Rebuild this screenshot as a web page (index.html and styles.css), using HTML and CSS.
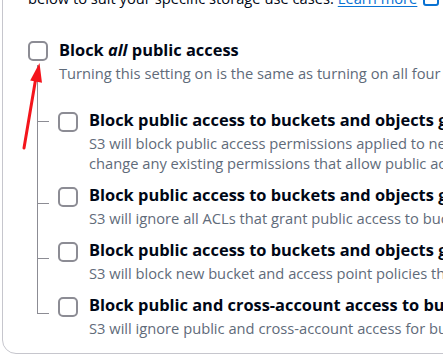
FILE: index.html
```html
<!DOCTYPE html>
<html lang="en">
<head>
    <meta charset="UTF-8">
    <meta name="viewport" content="width=device-width, initial-scale=1.0">
    <title>Block Public Access settings</title>
    <link rel="stylesheet" href="styles.css">
</head>
<body>
    <div class="panel">
        <p class="intro">
            below to suit your specific storage use cases.
            <a href="#" class="learn-more">Learn more</a>
            <svg class="ext-icon" width="16" height="16" viewBox="0 0 16 16" fill="none">
                <rect x="1" y="1" width="14" height="14" rx="2" stroke="#0972d3" stroke-width="2"/>
            </svg>
        </p>

        <div class="option main-option">
            <span class="checkbox"></span>
            <div class="option-text">
                <div class="option-title">Block <em>all</em> public access</div>
                <div class="option-desc">Turning this setting on is the same as turning on all four settings below. Each of the following settings are independent of one another.</div>
            </div>
        </div>

        <div class="sub-options">
            <div class="option sub-option first">
                <span class="checkbox"></span>
                <div class="option-text">
                    <div class="option-title">Block public access to buckets and objects granted through <em>new</em> access control lists (ACLs)</div>
                    <div class="option-desc">S3 will block public access permissions applied to newly added buckets or objects, and prevent the creation of new public access ACLs for existing buckets and objects. This setting doesn't<br>change any existing permissions that allow public access to S3 resources using ACLs.</div>
                </div>
            </div>
            <div class="option sub-option">
                <span class="checkbox"></span>
                <div class="option-text">
                    <div class="option-title">Block public access to buckets and objects granted through <em>any</em> access control lists (ACLs)</div>
                    <div class="option-desc">S3 will ignore all ACLs that grant public access to buckets and objects.</div>
                </div>
            </div>
            <div class="option sub-option">
                <span class="checkbox"></span>
                <div class="option-text">
                    <div class="option-title">Block public access to buckets and objects granted through <em>new</em> public bucket or access point policies</div>
                    <div class="option-desc">S3 will block new bucket and access point policies that grant public access to buckets and objects. This setting doesn't change any existing policies that allow public access to S3 resources.</div>
                </div>
            </div>
            <div class="option sub-option last">
                <span class="checkbox"></span>
                <div class="option-text">
                    <div class="option-title">Block public and cross-account access to buckets and objects through <em>any</em> public bucket or access point policies</div>
                    <div class="option-desc">S3 will ignore public and cross-account access for buckets or access points with policies that grant public access to buckets and objects.</div>
                </div>
            </div>
        </div>
    </div>

    <!-- annotation arrow pointing at the "Block all" checkbox -->
    <svg class="arrow" width="60" height="160" viewBox="0 0 60 160">
        <line x1="24" y1="148" x2="35.5" y2="80" stroke="#f4151c" stroke-width="3" stroke-linecap="round"/>
        <polygon points="39.5,63 42,82.8 30.2,80.6" fill="#f4151c"/>
    </svg>
</body>
</html>
```
FILE: styles.css
```css
* {
    margin: 0;
    padding: 0;
    box-sizing: border-box;
}

body {
    font-family: 'Open Sans', 'Noto Sans', sans-serif;
    background: #ffffff;
    color: #000716;
    width: 443px;
    height: 355px;
    overflow: hidden;
    position: relative;
}

.panel {
    margin: -30px 0 0 2px;
    width: 900px;
    height: 384px;
    border: 1px solid #c6c6cd;
    border-radius: 14px;
    padding: 17px 0 0 25px;
    white-space: nowrap;
}

.intro {
    font-size: 14.7px;
    line-height: 20px;
    color: #000716;
    display: flex;
    align-items: center;
    gap: 4px;
}

.learn-more {
    color: #0972d3;
    text-decoration: underline;
    text-underline-offset: 2px;
}

.ext-icon {
    margin-left: 2px;
}

.option {
    display: flex;
    gap: 11px;
    position: relative;
}

.main-option {
    margin-top: 31px;
}

.checkbox {
    flex: none;
    width: 20px;
    height: 20px;
    margin-top: 2px;
    border: 2px solid #8c8c94;
    border-radius: 5px;
    background: #ffffff;
}

.option-title {
    font-size: 16.4px;
    font-weight: 700;
    line-height: 22px;
}

.option-title em {
    font-style: italic;
}

.option-desc {
    margin-top: 2px;
    font-size: 14.7px;
    line-height: 20px;
    color: #5f6b7a;
}

.sub-options {
    margin: 26px 0 0 30px;
    position: relative;
}

/* vertical tree line, from under the main checkbox to the last branch */
.sub-options::before {
    content: "";
    position: absolute;
    left: -21px;
    top: -44px;
    bottom: 24px;
    border-left: 1px solid #8c8c94;
}

.sub-option {
    margin-bottom: 11px;
}

.sub-option .checkbox {
    margin-top: 3px;
}

/* horizontal branch to each checkbox */
.sub-option::before {
    content: "";
    position: absolute;
    left: -21px;
    top: 19px;
    width: 12px;
    border-top: 1px solid #8c8c94;
}

.sub-option.first::before {
    top: 12px;
}

.sub-option.last {
    margin-bottom: 0;
}

.arrow {
    position: absolute;
    left: 0;
    top: 0;
}
```
